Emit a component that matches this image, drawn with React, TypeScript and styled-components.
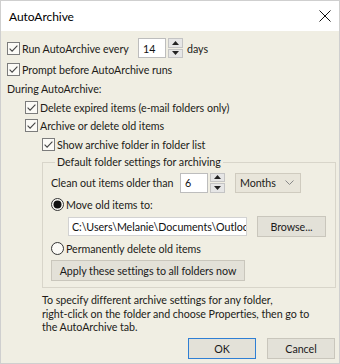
import React from "react";
import styled, { createGlobalStyle } from "styled-components";

const Global = createGlobalStyle`
  html, body { margin: 0; padding: 0; background: #ffffff; }
  body { font-family: Lato, "Noto Sans", sans-serif; font-size: 10.7px; letter-spacing: -0.05px; color: #221c18; }
  * { box-sizing: border-box; }
`;

const Window = styled.div`
  width: 340px;
  height: 364px;
  border: 1px solid #cfcfcf;
  background: #f0eee3;
  display: flex;
  flex-direction: column;
`;

const TitleBar = styled.div`
  height: 30px;
  background: #ffffff;
  display: flex;
  align-items: center;
  justify-content: space-between;
  padding: 0 8px 0 8px;
  font-size: 12px;
  color: #000;
`;

const Body = styled.div`
  flex: 1;
  padding: 6px 3px 0 6px;
  display: flex;
  flex-direction: column;
`;

const Row = styled.div<{ $indent?: number; $h?: number }>`
  display: flex;
  align-items: center;
  height: ${(p) => p.$h ?? 19}px;
  margin-left: ${(p) => p.$indent ?? 0}px;
  white-space: nowrap;
`;

const Label = styled.span<{ $gap?: number; $w?: number }>`
  margin-left: ${(p) => p.$gap ?? 2}px;
  ${(p) => (p.$w ? `width: ${p.$w}px; flex: none;` : "")}
`;

const BoxSvg = styled.svg`
  flex: none;
  width: 13px;
  height: 13px;
  display: block;
`;

const Check = () => (
  <BoxSvg viewBox="0 0 13 13">
    <rect x="0.5" y="0.5" width="12" height="12" fill="#fbfaf6" stroke="#7c7c7c" />
    <path d="M2.6 6.6 L5.1 9.2 L10.4 3.6" fill="none" stroke="#444" strokeWidth="1.1" />
  </BoxSvg>
);

const Radio = ({ on }: { on?: boolean }) => (
  <BoxSvg viewBox="0 0 13 13">
    <circle cx="6.5" cy="6.5" r="6" fill="#fbfaf6" stroke="#333" />
    {on && <circle cx="6.5" cy="6.5" r="4" fill="#111" />}
  </BoxSvg>
);

const NumBox = styled.div`
  width: 28px;
  height: 20px;
  background: #fff;
  border: 1px solid #bdbdbd;
  display: flex;
  align-items: center;
  padding-left: 4px;
  color: #111;
  flex: none;
`;

const Spin = styled.div`
  margin-left: 2px;
  width: 15px;
  height: 20px;
  display: flex;
  flex-direction: column;
  gap: 1px;
  flex: none;
`;

const SpinBtn = styled.div`
  flex: 1;
  background: #e6e6e6;
  border: 1px solid #c4c4c4;
  display: flex;
  align-items: center;
  justify-content: center;
`;

const Tri = ({ up }: { up?: boolean }) => (
  <svg width="7" height="4" viewBox="0 0 7 4">
    <path d={up ? "M0 4 L3.5 0 L7 4 Z" : "M0 0 L3.5 4 L7 0 Z"} fill="#222" />
  </svg>
);

const Spinner = () => (
  <Spin>
    <SpinBtn>
      <Tri up />
    </SpinBtn>
    <SpinBtn>
      <Tri />
    </SpinBtn>
  </Spin>
);

const Section = styled.div`
  height: 19px;
  display: flex;
  align-items: center;
`;

const Group = styled.fieldset`
  margin: 0 0 0 35px;
  padding: 2px 0 5px 8px;
  border: 1px solid #d8d5ca;
  display: flex;
  flex-direction: column;
`;

const Legend = styled.legend`
  padding: 0 2px;
  margin-left: 4px;
  line-height: 16px;
`;

const Select = styled.div`
  margin-left: 10px;
  width: 66px;
  height: 20px;
  background: #e8e5da;
  border: 1px solid #cfcbbf;
  display: flex;
  align-items: center;
  justify-content: space-between;
  padding: 0 6px 0 4px;
  flex: none;
`;

const PathInput = styled.div`
  width: 179px;
  height: 19px;
  background: #fff;
  border: 1px solid #d2d2d2;
  display: flex;
  align-items: center;
  padding-left: 3px;
  overflow: hidden;
  white-space: nowrap;
  color: #111;
`;

const Button = styled.div<{ $w: number; $h?: number; $primary?: boolean; $ml?: number }>`
  width: ${(p) => p.$w}px;
  height: ${(p) => p.$h ?? 21}px;
  margin-left: ${(p) => p.$ml ?? 0}px;
  background: #e3e1d8;
  border: 1px solid ${(p) => (p.$primary ? "#2f7fd4" : "#c9c6bc")};
  display: flex;
  align-items: center;
  justify-content: center;
  color: #1a1a1a;
  flex: none;
`;

const Note = styled.div`
  margin: 5px 0 0 35px;
  line-height: 13.5px;
`;

const Footer = styled.div`
  display: flex;
  justify-content: flex-end;
  margin-top: 4px;
  padding-right: 1px;
`;

export default function App() {
  return (
    <>
      <Global />
      <Window>
        <TitleBar>
          <span>AutoArchive</span>
          <svg width="12" height="12" viewBox="0 0 12 12">
            <path d="M0.5 0.5 L11.5 11.5 M11.5 0.5 L0.5 11.5" stroke="#111" strokeWidth="1" />
          </svg>
        </TitleBar>
        <Body>
          <Row $h={22}>
            <Check />
            <Label $w={116}>Run AutoArchive every</Label>
            <NumBox>14</NumBox>
            <Spinner />
            <Label $gap={4}>days</Label>
          </Row>
          <Row $h={20}>
            <Check />
            <Label>Prompt before AutoArchive runs</Label>
          </Row>
          <Section>During AutoArchive:</Section>
          <Row $indent={18} $h={18}>
            <Check />
            <Label>Delete expired items (e-mail folders only)</Label>
          </Row>
          <Row $indent={18}>
            <Check />
            <Label>Archive or delete old items</Label>
          </Row>
          <Row $indent={35} $h={19}>
            <Check />
            <Label>Show archive folder in folder list</Label>
          </Row>
          <Group>
            <Legend>Default folder settings for archiving</Legend>
            <Row $h={21}>
              <Label $gap={0} $w={129}>Clean out items older than</Label>
              <NumBox>6</NumBox>
              <Spinner />
              <Select>
                <span>Months</span>
                <svg width="9" height="5" viewBox="0 0 9 5">
                  <path d="M0.5 0.5 L4.5 4.5 L8.5 0.5" fill="none" stroke="#888" />
                </svg>
              </Select>
            </Row>
            <Row $h={22}>
              <Radio on />
              <Label>Move old items to:</Label>
            </Row>
            <Row $h={22} $indent={17}>
              <PathInput>C:\Users\Melanie\Documents\Outlook</PathInput>
              <Button $w={69} $ml={10}>Browse...</Button>
            </Row>
            <Row $h={22}>
              <Radio />
              <Label>Permanently delete old items</Label>
            </Row>
            <Row $h={23}>
              <Button $w={194} $h={21}>Apply these settings to all folders now</Button>
            </Row>
          </Group>
          <Note>
            To specify different archive settings for any folder,
            <br />
            right-click on the folder and choose Properties, then go to
            <br />
            the AutoArchive tab.
          </Note>
          <Footer>
            <Button $w={68} $primary>OK</Button>
            <Button $w={68} $ml={11}>Cancel</Button>
          </Footer>
        </Body>
      </Window>
    </>
  );
}
